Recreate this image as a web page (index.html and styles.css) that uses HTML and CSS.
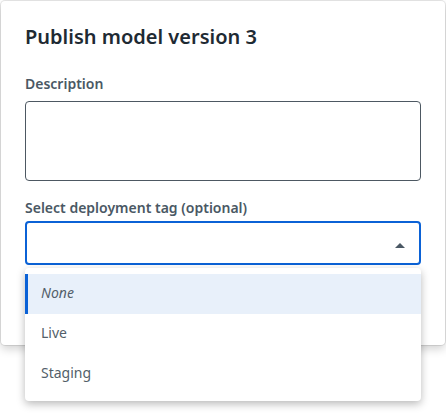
FILE: index.html
```html
<!DOCTYPE html>
<html>
<head>
<meta charset="utf-8">
<link rel="stylesheet" href="styles.css">
</head>
<body>
<div class="dialog">
  <h1 class="title">Publish model version 3</h1>
  <label class="label">Description</label>
  <div class="textarea"></div>
  <label class="label label-select">Select deployment tag (optional)</label>
  <div class="select-wrap">
    <div class="select">
      <svg class="caret" width="10" height="5" viewBox="0 0 10 5"><path d="M0 5 L5 0 L10 5 Z" fill="#4a5864"/></svg>
    </div>
    <ul class="menu">
      <li class="item item-active"><em>None</em></li>
      <li class="item">Live</li>
      <li class="item">Staging</li>
    </ul>
  </div>
</div>
</body>
</html>
```

FILE: styles.css
```css
html, body {
  margin: 0;
  padding: 0;
  background: #ffffff;
}
html {
  min-height: 414px;
}
body {
  font-family: "Noto Sans", "Open Sans", sans-serif;
  padding: 1px;
  min-height: 412px;
}
.dialog {
  width: 396px;
  height: 296px;
  padding: 24px;
  background: #fff;
  border-radius: 4px;
  box-shadow: 0 0 0 1px rgba(0,0,0,0.09), 0 4px 10px rgba(0,0,0,0.18);
}
.title {
  margin: 0;
  font-size: 20px;
  font-weight: 600;
  line-height: 24px;
  color: #1e2a33;
}
.label {
  display: block;
  margin-top: 25px;
  font-size: 14px;
  font-weight: 600;
  line-height: 20px;
  color: #4a5864;
}
.textarea {
  margin-top: 7px;
  height: 78px;
  border: 1px solid #4d5862;
  border-radius: 4px;
}
.label-select {
  margin-top: 17px;
}
.select-wrap {
  position: relative;
  margin-top: 3px;
}
.select {
  height: 40px;
  border: 2px solid #0b62d6;
  border-radius: 4px;
  display: flex;
  align-items: center;
  justify-content: flex-end;
  padding-right: 14px;
}
.caret {
  display: block;
  margin-top: 4px;
}
.menu {
  position: absolute;
  z-index: 2;
  left: 0;
  right: 0;
  top: 47px;
  margin: 0;
  padding: 6px 0 7px;
  list-style: none;
  background: #fff;
  border-radius: 4px;
  box-shadow: 0 3px 8px rgba(0,0,0,0.28);
}
.item {
  height: 40px;
  display: flex;
  align-items: center;
  padding-left: 13px;
  padding-bottom: 3px;
  font-size: 14px;
  color: #535f6a;
  border-left: 3px solid transparent;
  box-sizing: border-box;
}
.item-active {
  background: #e8f0fa;
  border-left-color: #0b62d6;
}
.item em {
  font-style: italic;
}
```
